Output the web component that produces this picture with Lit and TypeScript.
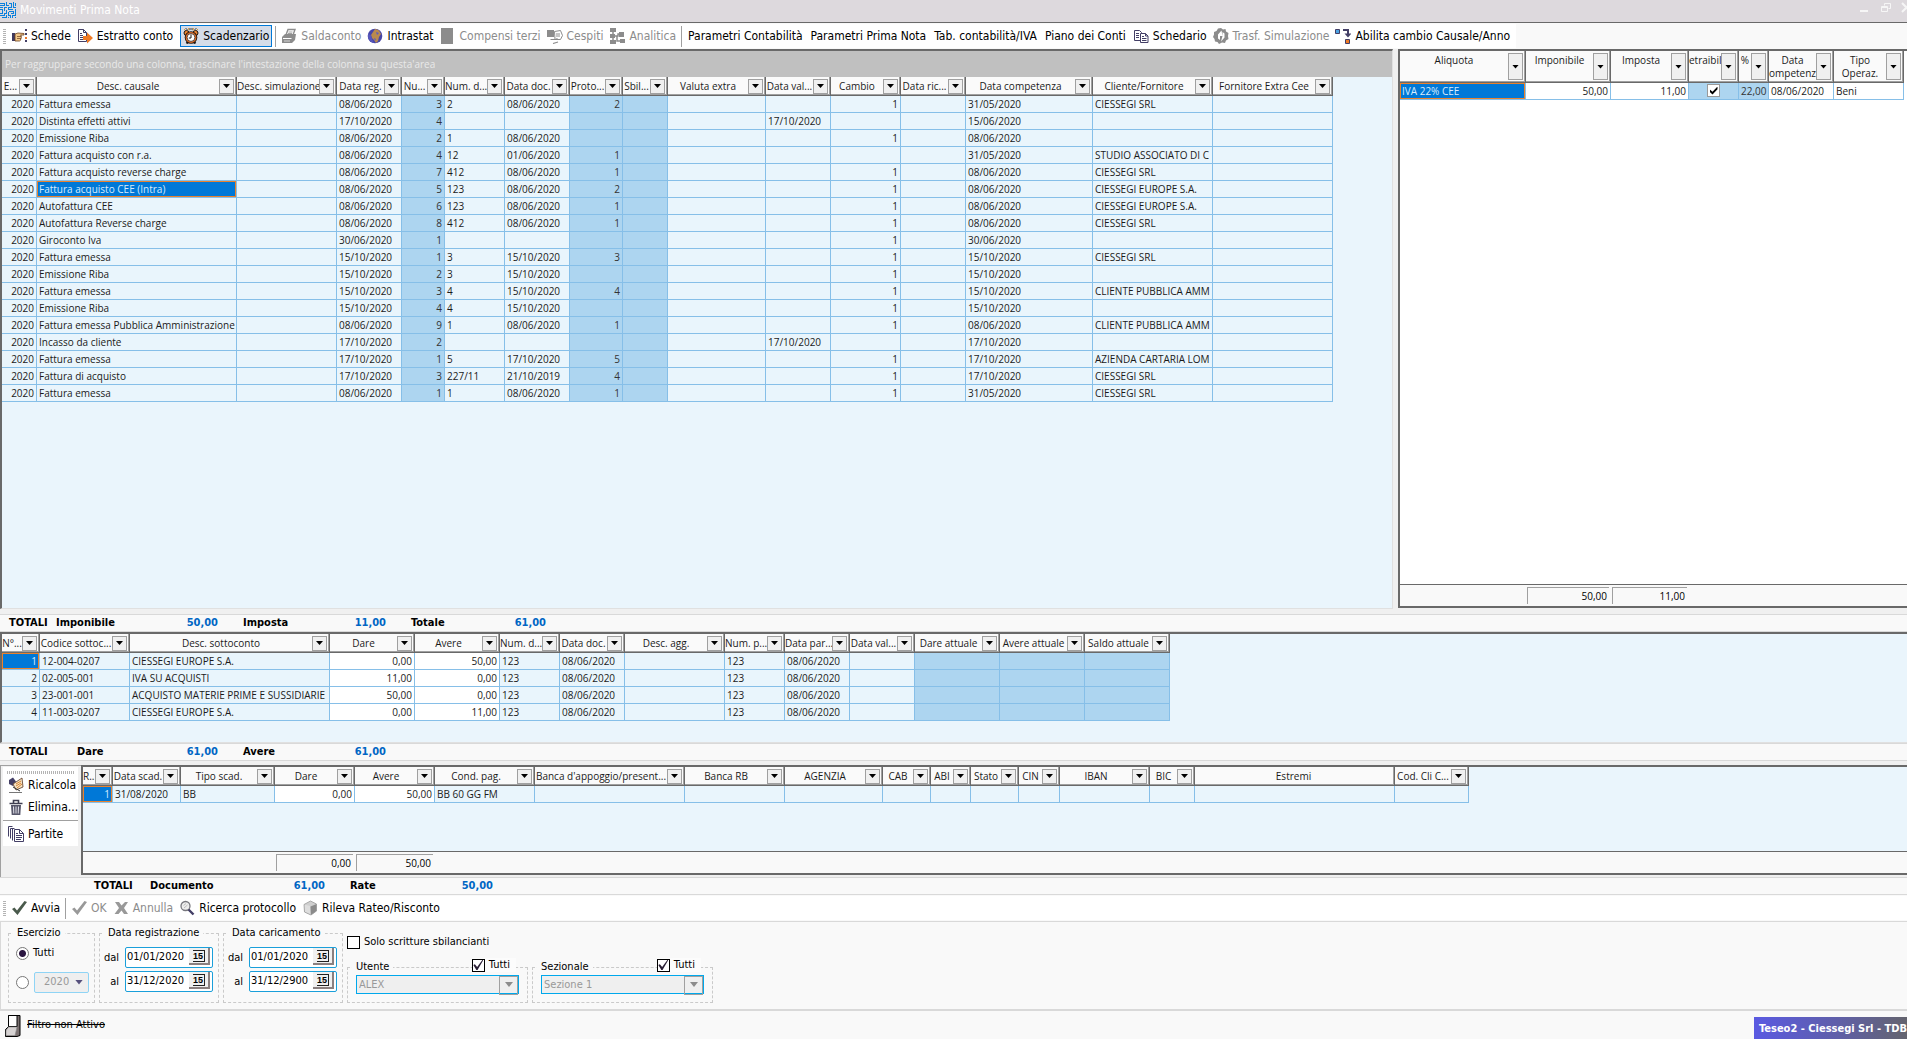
import { LitElement, html, css, svg, nothing } from "lit";
import { customElement, property } from "lit/decorators.js";
import { classMap } from "lit/directives/class-map.js";
import { styleMap } from "lit/directives/style-map.js";

type Column = {
  title: string;
  width: number;
  right?: boolean;
  tone?: "mid" | "white";
  noFilter?: boolean;
  check?: boolean;
};

const INK = "#433f66";

const ICONS: Record<string, unknown> = {
  maze: svg`<g fill="none" stroke="#0a80dc" stroke-width="1" shape-rendering="crispEdges">
    <path d="M0 1.500H4.500V3.500H0M2.500 5.500H0M6.500 0V3.500H9M6.500 5.500H4.500V9M8.500 1.500H11.500V5.500H8.500V7.500H13M13.500 0V5.500H16M15.500 1V3.500M0 7.500H2.500V11.500H0M6.500 7.500V11.500H4.500V13.500H0M1.500 15.500H6.500V13M8.500 9.500V13.500H10.500V16M8.500 9.500H13.500V11.500H11M15.500 7V13.500H12.500V16M8.500 15V16M14.500 15.500H16"/></g>`,
  hand: svg`<path d="M1 5h3v8H1z" fill="#3f3a60"/><path d="M4 6l3-1 6 .5v1.500H9.500l1 1-.5 1 .5 1-1 1 .3 1-1.300 1H4z" fill="#f3c98b" stroke="#6b3f1d" stroke-width=".8"/><path d="M6 8.500h4M6 10.500h4" stroke="#6b3f1d" stroke-width=".7"/><path d="M14 1h2v2h-2zM14 5h2v2h-2zM14 12h2v2h-2z" fill="${INK}"/><path d="M14 9h2v2h-2z" fill="#e8762c"/>`,
  export: svg`<path d="M1.500 1.500h5l3 3v9h-8z" fill="#fff" stroke="${INK}"/><path d="M6.500 1.500v3h3" fill="none" stroke="${INK}"/><path d="M3 5.500h2M3 7.500h3M3 9.500h3M3 11.500h3" stroke="${INK}"/><path d="M6 8h4V4.500L16 10l-6 5.500V12H6z" fill="#ef7a24"/>`,
  clock: svg`<path d="M3 3L1 1M6 2.500L5.500 0M10 2.500l.5-2.500M13 3l2-2" stroke="#d79b3c"/><path d="M7 0v2M9 0v2M2.500 0l2 2M13.500 0l-2 2" stroke="#1c1614" stroke-width=".8"/><circle cx="3.500" cy="5" r="2.500" fill="#f0862f" stroke="#1c1614"/><circle cx="12.500" cy="5" r="2.500" fill="#f0862f" stroke="#1c1614"/><path d="M3.500 15.500l2-2M12.500 15.500l-2-2" stroke="#1c1614" stroke-width="2"/><circle cx="8" cy="9.500" r="6.300" fill="#1c1614"/><circle cx="8" cy="9.500" r="5.400" fill="#e06a22"/><circle cx="8" cy="9.500" r="3.900" fill="#fff" stroke="#1c1614" stroke-width=".7"/><path d="M8 6.500v3.500H5.800" fill="none" stroke="#1c1614"/>`,
  printer: svg`<path d="M5 7l2-5.500h7L12 7z" fill="#fff" stroke="#8c8c8c" stroke-width="1.400"/><path d="M7.500 4h4M7 5.500h4" stroke="#8c8c8c" stroke-width=".8"/><path d="M1 9l3-3h11l-1 6-3 3H1z" fill="#8c8c8c"/><path d="M2 10.500h8.500" stroke="#fff"/><path d="M3 13h6" stroke="#d5d5d5"/>`,
  globe: svg`<circle cx="8" cy="8" r="7.300" fill="#4646a8"/><path d="M8 1a7 7 0 0 1 4 1.500L14 6l-2 3-1 4-2 2-2-3-2-2-1-3 2-3z" fill="#b98a4e"/><path d="M9 4l3 1-2 2zM7 10l2 1-1 2z" fill="#5a5ac0"/><path d="M1 6l3 1 1 4 2 4a7.300 7.300 0 0 1-6-6z" fill="#5656bb"/>`,
  block: svg`<path d="M2 0h12v16H2z" fill="#8c8c8c"/>`,
  assets: svg`<path d="M0 2h7v7H0z" fill="#8c8c8c"/><path d="M7.500 3.500l6-1 2 5-2 4H8z" fill="#fff" stroke="#8c8c8c"/><path d="M9 6h4M9 8h4" stroke="#8c8c8c"/><path d="M3.500 11.500h5l2-1M6 15.500l5-1.500" fill="none" stroke="#8c8c8c" stroke-width="1.200"/>`,
  tree: svg`<path d="M1 0h6v4H1zM1 6h5v4H1zM1 12h6v4H1zM10 4h5v5h-5zM11 11h5v4h-5z" fill="#8c8c8c"/><path d="M4 2v12M6 8h3V6h2M8 8v5h4" fill="none" stroke="#8c8c8c" stroke-width="1.500"/>`,
  cards: svg`<path d="M1.500 2.500h5l2 2v8h-7z" fill="#fff" stroke="${INK}"/><path d="M3 5.500h3M3 7.500h3M3 9.500h3" stroke="${INK}"/><path d="M7.500 5.500h5l2.500 2.500v6.500H7.500z" fill="#fff" stroke="${INK}"/><path d="M12.500 5.500V8H15M9 8.500h2M9 10.500h4.500M9 12.500h4.500" fill="none" stroke="${INK}"/>`,
  sync: svg`<path d="M8 0l2 1.500 2.500-.5.500 2.500L15.500 5l-.5 3 .5 3-2.500 1.500L12 15l-3-.5L6 16l-1.500-2L2 13.500 1.500 11 0 9l1-2.500L1 4l2.500-1L5 .5z" fill="#8c8c8c"/><path d="M8.500 2.500L5 6.500v4l2 1.500V8h2.500zM8 13.500l3.500-4v-4L9.500 4v4" fill="#fff"/>`,
  swap: svg`<path d="M.5 1.500h4v4h-4z" fill="#4ba3e3" stroke="${INK}"/><path d="M8 2h5v6" fill="none" stroke="${INK}" stroke-width="2"/><path d="M9.500 5.500h7L13 9.500z" fill="${INK}"/><path d="M10.500 11.500h4v4h-4z" fill="#ef7a24" stroke="${INK}"/>`,
  recalc: svg`<path d="M1 3l4-2.500 3 4L5 9 1 7z" fill="${INK}"/><path d="M5 7l9-6 1 9-7 3z" fill="#f6e3c4" stroke="#6b4b35" stroke-width=".9"/><path d="M8 7l5-3M8 9l5-3M9 11l5-4" stroke="#d8842f"/><path d="M1 15.500h13" stroke="#777"/><path d="M5 10l7 4" stroke="#333"/>`,
  trash: svg`<path d="M1.500 4.500h13M5.500 4V1.500h5V4" fill="none" stroke="#3d3d50" stroke-width="1.600"/><path d="M3 6h10l-.7 10H3.700z" fill="#56566a"/><path d="M5.500 7.500l.3 7M8 7.500v7M10.500 7.500l-.3 7" stroke="#e6e6ee"/>`,
  pages: svg`<path d="M.5 10.500v-10h4M2.500 12.500v-10h4M4.500 14.500v-12" fill="none" stroke="${INK}"/><path d="M6.500 3.500h5l4 4v8h-9z" fill="#fff" stroke="${INK}"/><path d="M11.500 3.500v4h4M8 7.500h2M8 9.500h6M8 11.500h6M8 13.500h5" fill="none" stroke="${INK}"/>`,
  check: svg`<path d="M1 9l2.500-1.500L6 10.500 13.500 1 16 2 6.500 15z" fill="#4a5a4c"/>`,
  checkOff: svg`<path d="M1 9l2.500-1.500L6 10.500 13.500 1 16 2 6.500 15z" fill="#999"/>`,
  cross: svg`<path d="M2 2h4l2.500 3.500L12 2h3l-4 6 4 6h-4L8.500 10.500 5.500 14H1.500l4.500-6z" fill="#999"/>`,
  lens: svg`<circle cx="6.500" cy="6" r="4.500" fill="#ededed" stroke="#77777d" stroke-width="1.300"/><path d="M4.500 5.500L7 3.500M5 8l3.500-3" stroke="#bbb"/><path d="M9.500 9.500l5 5" stroke="${INK}" stroke-width="2.400"/>`,
  cube: svg`<path d="M2 4.500L8.500 1 14.500 4v7L9 15 2.500 12z" fill="#cfcfcf"/><path d="M2 4.500L8 6v9L2.500 12z" fill="#dedede"/><path d="M8.500 6.500l6-2.500v7L9 15z" fill="#8b8b8b"/><path d="M2 4.500L8.500 1 14.500 4v7L9 15 2.500 12z" fill="none" stroke="#999" stroke-width=".8"/>`,
};

const icon = (name: string) =>
  html`<svg class="icon" width="16" height="16" viewBox="0 0 16 16" aria-hidden="true">${ICONS[name]}</svg>`;

@customElement("data-grid")
class DataGrid extends LitElement {
  @property({ attribute: false }) columns: Column[] = [];
  @property({ attribute: false }) rows: string[][] = [];
  @property({ attribute: false }) selected: [number, number] = [0, 0];
  @property({ type: Boolean }) tall = false;

  static styles = css`
    :host {
      display: block;
    }
    table {
      table-layout: fixed;
      border-collapse: separate;
      border-spacing: 0;
      font: 10px/16px "Open Sans", "Noto Sans", sans-serif;
      color: #1a1a1a;
    }
    th,
    td {
      box-sizing: border-box;
      padding: 0;
      font-weight: 400;
      overflow: hidden;
      white-space: nowrap;
    }
    th {
      height: 19px;
      background: #fafafa;
      border-right: 1px solid #696969;
      border-bottom: 1px solid #696969;
      box-shadow: inset -1px -1px #a0a0a0;
    }
    .head {
      display: flex;
      align-items: center;
      height: 18px;
      padding-right: 2px;
    }
    .caption {
      flex: 1;
      min-width: 0;
      overflow: hidden;
      text-align: center;
    }
    .tall th {
      height: 32px;
    }
    .tall .head {
      height: 31px;
    }
    .tall .caption {
      align-self: flex-start;
      line-height: 13px;
      padding-top: 3px;
      white-space: pre;
    }
    .filter {
      flex: none;
      box-sizing: border-box;
      width: 15px;
      height: 15px;
      padding: 0;
      display: grid;
      place-items: center;
      background: #f0f0f0;
      border: 1px solid #a0a0a0;
    }
    .tall .filter {
      height: 27px;
    }
    .filter::before {
      content: "";
      width: 7px;
      height: 4px;
      background: #000;
      clip-path: polygon(0 0, 100% 0, 50% 100%);
    }
    td {
      height: 17px;
      padding: 0 2px;
      background: #e9f5fc;
      border-right: 1px solid #86bfe8;
      border-bottom: 1px solid #86bfe8;
    }
    td.white,
    .tall td {
      background: #fff;
    }
    td.mid,
    .tall td.mid {
      background: #add5f0;
      color: #333;
    }
    td.right {
      text-align: right;
    }
    td.center {
      text-align: center;
    }
    td.selected,
    .tall td.selected {
      background: #0078d7;
      color: #d6ecff;
      box-shadow: inset 0 0 0 1px #e8822e;
    }
    input {
      appearance: none;
      display: inline-grid;
      place-items: center;
      width: 13px;
      height: 13px;
      margin: 1px 0 0;
      border: 1px solid #999;
      background: #fff;
      box-sizing: border-box;
      vertical-align: top;
    }
    input:checked::before {
      content: "";
      width: 8px;
      height: 8px;
      background: #000;
      clip-path: polygon(0 35%, 38% 65%, 100% 0, 100% 35%, 38% 100%, 0 65%);
    }
  `;

  render() {
    const total = this.columns.reduce((sum, c) => sum + c.width, 0);
    return html`<table class=${classMap({ tall: this.tall })} style=${styleMap({ width: `${total}px` })}>
      <colgroup>
        ${this.columns.map((c) => html`<col style=${styleMap({ width: `${c.width}px` })} />`)}
      </colgroup>
      <thead>
        <tr>
          ${this.columns.map(
            (c) => html`<th scope="col">
              <div class="head">
                <span class="caption">${c.title}</span>${c.noFilter ? nothing : html`<button class="filter" type="button" aria-haspopup="menu"></button>`}
              </div>
            </th>`
          )}
        </tr>
      </thead>
      <tbody>
        ${this.rows.map(
          (row, r) => html`<tr>
            ${this.columns.map(
              (c, i) => html`<td
                class=${classMap({
                  right: !!c.right,
                  center: !!c.check,
                  mid: c.tone === "mid",
                  white: c.tone === "white",
                  selected: this.selected[0] === r && this.selected[1] === i,
                })}
              >${c.check ? html`<input type="checkbox" aria-label=${c.title} checked />` : row[i] ?? ""}</td>`
            )}
          </tr>`
        )}
      </tbody>
    </table>`;
  }
}

const ENTRY_COLUMNS: Column[] = [
  { title: "E...", width: 35, right: true },
  { title: "Desc. causale", width: 200 },
  { title: "Desc. simulazione", width: 100 },
  { title: "Data reg.", width: 65 },
  { title: "Nu...", width: 43, right: true, tone: "mid" },
  { title: "Num. d...", width: 60 },
  { title: "Data doc.", width: 65 },
  { title: "Proto...", width: 53, right: true, tone: "mid" },
  { title: "Sbil...", width: 45, tone: "mid" },
  { title: "Valuta extra", width: 98 },
  { title: "Data val...", width: 65 },
  { title: "Cambio", width: 70, right: true },
  { title: "Data ric...", width: 65 },
  { title: "Data competenza", width: 127 },
  { title: "Cliente/Fornitore", width: 120 },
  { title: "Fornitore Extra Cee", width: 120 },
];

const entry = (
  causale: string, reg: string, num: string, numDoc: string, doc: string,
  proto: string, valuta: string, cambio: string, competenza: string, cliente = ""
) => ["2020", causale, "", reg, num, numDoc, doc, proto, "", "", valuta, cambio, "", competenza, cliente, ""];

const ENTRIES = [
  entry("Fattura emessa", "08/06/2020", "3", "2", "08/06/2020", "2", "", "1", "31/05/2020", "CIESSEGI SRL"),
  entry("Distinta effetti attivi", "17/10/2020", "4", "", "", "", "17/10/2020", "", "15/06/2020"),
  entry("Emissione Riba", "08/06/2020", "2", "1", "08/06/2020", "", "", "1", "08/06/2020"),
  entry("Fattura acquisto con r.a.", "08/06/2020", "4", "12", "01/06/2020", "1", "", "", "31/05/2020", "STUDIO ASSOCIATO DI C"),
  entry("Fattura acquisto reverse charge", "08/06/2020", "7", "412", "08/06/2020", "1", "", "1", "08/06/2020", "CIESSEGI SRL"),
  entry("Fattura acquisto CEE (Intra)", "08/06/2020", "5", "123", "08/06/2020", "2", "", "1", "08/06/2020", "CIESSEGI EUROPE S.A."),
  entry("Autofattura CEE", "08/06/2020", "6", "123", "08/06/2020", "1", "", "1", "08/06/2020", "CIESSEGI EUROPE S.A."),
  entry("Autofattura Reverse charge", "08/06/2020", "8", "412", "08/06/2020", "1", "", "1", "08/06/2020", "CIESSEGI SRL"),
  entry("Giroconto Iva", "30/06/2020", "1", "", "", "", "", "1", "30/06/2020"),
  entry("Fattura emessa", "15/10/2020", "1", "3", "15/10/2020", "3", "", "1", "15/10/2020", "CIESSEGI SRL"),
  entry("Emissione Riba", "15/10/2020", "2", "3", "15/10/2020", "", "", "1", "15/10/2020"),
  entry("Fattura emessa", "15/10/2020", "3", "4", "15/10/2020", "4", "", "1", "15/10/2020", "CLIENTE PUBBLICA AMM"),
  entry("Emissione Riba", "15/10/2020", "4", "4", "15/10/2020", "", "", "1", "15/10/2020"),
  entry("Fattura emessa Pubblica Amministrazione", "08/06/2020", "9", "1", "08/06/2020", "1", "", "1", "08/06/2020", "CLIENTE PUBBLICA AMM"),
  entry("Incasso da cliente", "17/10/2020", "2", "", "", "", "17/10/2020", "", "17/10/2020"),
  entry("Fattura emessa", "17/10/2020", "1", "5", "17/10/2020", "5", "", "1", "17/10/2020", "AZIENDA CARTARIA LOM"),
  entry("Fattura di acquisto", "17/10/2020", "3", "227/11", "21/10/2019", "4", "", "1", "17/10/2020", "CIESSEGI SRL"),
  entry("Fattura emessa", "08/06/2020", "1", "1", "08/06/2020", "1", "", "1", "31/05/2020", "CIESSEGI SRL"),
];

const VAT_COLUMNS: Column[] = [
  { title: "Aliquota", width: 126 },
  { title: "Imponibile", width: 85, right: true },
  { title: "Imposta", width: 78, right: true },
  { title: "etraibil", width: 50, tone: "mid", check: true },
  { title: "%", width: 30, right: true, tone: "mid" },
  { title: "Data\nompetenz", width: 65 },
  { title: "Tipo\nOperaz.", width: 70 },
];
const VAT_ROWS = [["IVA 22% CEE", "50,00", "11,00", "", "22,00", "08/06/2020", "Beni"]];

const ACCOUNT_COLUMNS: Column[] = [
  { title: "N°...", width: 38, right: true },
  { title: "Codice sottoc...", width: 90 },
  { title: "Desc. sottoconto", width: 200 },
  { title: "Dare", width: 85, right: true, tone: "white" },
  { title: "Avere", width: 85, right: true, tone: "white" },
  { title: "Num. d...", width: 60 },
  { title: "Data doc.", width: 65 },
  { title: "Desc. agg.", width: 100 },
  { title: "Num. p...", width: 60 },
  { title: "Data par...", width: 65 },
  { title: "Data val...", width: 65 },
  { title: "Dare attuale", width: 85, tone: "mid" },
  { title: "Avere attuale", width: 85, tone: "mid" },
  { title: "Saldo attuale", width: 85, tone: "mid" },
];
const account = (n: string, code: string, desc: string, dare: string, avere: string) => [
  n, code, desc, dare, avere, "123", "08/06/2020", "", "123", "08/06/2020",
];
const ACCOUNTS = [
  account("1", "12-004-0207", "CIESSEGI EUROPE S.A.", "0,00", "50,00"),
  account("2", "02-005-001", "IVA SU ACQUISTI", "11,00", "0,00"),
  account("3", "23-001-001", "ACQUISTO MATERIE PRIME E SUSSIDIARIE", "50,00", "0,00"),
  account("4", "11-003-0207", "CIESSEGI EUROPE S.A.", "0,00", "11,00"),
];

const DUE_COLUMNS: Column[] = [
  { title: "R...", width: 30, right: true },
  { title: "Data scad.", width: 68 },
  { title: "Tipo scad.", width: 94 },
  { title: "Dare", width: 80, right: true, tone: "white" },
  { title: "Avere", width: 80, right: true, tone: "white" },
  { title: "Cond. pag.", width: 100 },
  { title: "Banca d'appoggio/present...", width: 150 },
  { title: "Banca RB", width: 100 },
  { title: "AGENZIA", width: 98 },
  { title: "CAB", width: 48 },
  { title: "ABI", width: 40 },
  { title: "Stato", width: 48 },
  { title: "CIN", width: 41 },
  { title: "IBAN", width: 90 },
  { title: "BIC", width: 45 },
  { title: "Estremi", width: 200, noFilter: true },
  { title: "Cod. Cli C...", width: 74 },
];
const DUES = [["1", "31/08/2020", "BB", "0,00", "50,00", "BB 60 GG FM"]];

type Tool = { label?: string; icon?: string; off?: boolean; active?: boolean; sep?: boolean };

const TOOLS: Tool[] = [
  { label: "Schede", icon: "hand" },
  { label: "Estratto conto", icon: "export" },
  { label: "Scadenzario", icon: "clock", active: true },
  { sep: true },
  { label: "Saldaconto", icon: "printer", off: true },
  { label: "Intrastat", icon: "globe" },
  { label: "Compensi terzi", icon: "block", off: true },
  { label: "Cespiti", icon: "assets", off: true },
  { label: "Analitica", icon: "tree", off: true },
  { sep: true },
  { label: "Parametri Contabilità" },
  { label: "Parametri Prima Nota" },
  { label: "Tab. contabilità/IVA" },
  { label: "Piano dei Conti" },
  { label: "Schedario", icon: "cards" },
  { label: "Trasf. Simulazione", icon: "sync", off: true },
  { label: "Abilita cambio Causale/Anno", icon: "swap" },
];

const ACTIONS: Tool[] = [
  { label: "Avvia", icon: "check" },
  { sep: true },
  { label: "OK", icon: "checkOff", off: true },
  { label: "Annulla", icon: "cross", off: true },
  { label: "Ricerca protocollo", icon: "lens" },
  { label: "Rileva Rateo/Risconto", icon: "cube" },
];

@customElement("app-root")
class AppRoot extends LitElement {
  static styles = css`
    :host {
      display: flex;
      flex-direction: column;
      min-height: 100vh;
      box-sizing: border-box;
      overflow: hidden;
      background: #f0f0f0;
      color: #000;
      font: 11px/14px "DejaVu Sans Condensed", "DejaVu Sans", sans-serif;
    }
    * {
      box-sizing: border-box;
    }
    button,
    input,
    select {
      font: inherit;
      color: inherit;
      margin: 0;
      border-radius: 0;
    }
    .icon {
      flex: none;
      display: block;
    }

    .title {
      display: flex;
      align-items: center;
      height: 23px;
      padding-bottom: 3px;
      background: #ddd9dd;
      border-bottom: 1px solid #696969;
      overflow: hidden;
    }
    .title h1 {
      flex: 1;
      margin: 0 0 0 4px;
      font-size: 12px;
      font-weight: 400;
      color: #fff;
    }
    .window {
      flex: none;
      width: 21px;
      height: 16px;
      padding: 0;
      border: 0;
      background: none;
    }
    .window:last-child {
      margin-right: -10px;
    }

    .toolbar {
      display: flex;
      align-items: center;
      height: 26px;
      background: #f9f9f9;
      font-size: 12px;
    }
    .tools {
      display: flex;
      align-items: center;
      height: 24px;
      padding: 0 3px;
      background: #fff;
    }
    .toolbar.wide .tools {
      flex: 1;
    }
    .grip {
      width: 3px;
      height: 15px;
      margin-right: 2px;
      background: repeating-linear-gradient(#b4b4b4 0 1px, #fff 1px 2px);
    }
    .tool {
      display: flex;
      align-items: center;
      gap: 4px;
      height: 22px;
      padding: 0 2px;
      border: 1px solid transparent;
      background: none;
      white-space: nowrap;
    }
    .tool.plain {
      padding: 0 3px;
    }
    .tool:disabled {
      color: #8c8c8c;
    }
    .tool.active {
      margin: 0 1px 0 4px;
      background: #d5dce8;
      border-color: #0078d7;
    }
    .sep {
      width: 1px;
      height: 21px;
      margin: 0 2px;
      background: #a0a0a0;
    }

    .upper {
      flex: 1;
      display: grid;
      grid-template-columns: minmax(0, 1fr) 509px;
      gap: 5px;
    }
    .panel {
      display: flex;
      flex-direction: column;
      min-width: 0;
      overflow: hidden;
      background: #eaf5fc;
      border-style: solid;
      border-width: 2px 0 1px 2px;
      border-color: #696969 #e0e0e0 #e0e0e0 #696969;
    }
    .panel.entries {
      border-right-width: 1px;
    }
    .panel.vat {
      margin-bottom: 1px;
      background: #fff;
      border-bottom: 2px solid #696969;
    }
    .group {
      height: 26px;
      padding: 5px 3px;
      background: #c0c0c0;
      color: #e9e9e9;
      font: 10px/16px "Open Sans", "Noto Sans", sans-serif;
    }
    .sums {
      display: flex;
      gap: 3px;
      height: 22px;
      margin-top: auto;
      padding: 2px 0 2px 127px;
      background: #f9f9f9;
      border-top: 1px solid #696969;
      font: 10px/16px "Open Sans", "Noto Sans", sans-serif;
    }
    .sum {
      height: 17px;
      padding: 0 2px;
      text-align: right;
      border: solid #a0a0a0;
      border-width: 1px 0 0 1px;
    }

    .totals {
      display: flex;
      align-items: center;
      height: 18px;
      padding-left: 9px;
      background: #f9f9f9;
      border: solid #d9d9d9;
      border-width: 1px 0;
      font-weight: 700;
    }
    .totals.first {
      margin-top: 5px;
    }
    .totals.second {
      margin-bottom: 4px;
    }
    .totals.third {
      padding-left: 94px;
    }
    .lead {
      flex: none;
    }
    .total {
      display: flex;
      justify-content: space-between;
      margin-right: 25px;
    }
    .amount {
      color: #0066c4;
    }

    .accounts {
      min-height: 111px;
    }
    .lower {
      display: flex;
      min-height: 112px;
    }
    .side {
      flex: none;
      width: 81px;
      padding: 1px 3px 0 2px;
      border-left: 1px solid #a0a0a0;
      border-top: 1px solid #a0a0a0;
    }
    .actions {
      display: flex;
      flex-direction: column;
      padding: 4px 0 1px;
      background: #fff;
      font-size: 12px;
    }
    .actions .tool {
      padding: 0 4px;
    }
    .rail {
      height: 3px;
      margin: 0 4px;
      background: repeating-linear-gradient(90deg, #b4b4b4 0 1px, #fff 1px 2px);
    }
    .rule {
      height: 1px;
      margin: 2px 0;
      background: #a0a0a0;
    }
    .dues {
      flex: 1;
      margin-bottom: 2px;
      border-bottom: 2px solid #696969;
    }
    .dues .sums {
      padding-left: 193px;
    }

    .filters {
      display: flex;
      gap: 4px;
      padding: 4px 8px 6px 7px;
      background: #f9f9f9;
      border-top: 1px solid #d9d9d9;
      border-left: 1px solid #d9d9d9;
      border-bottom: 2px solid #d9d9d9;
    }
    fieldset {
      position: relative;
      min-width: 0;
      margin: 0;
      padding: 0;
      border: 1px dashed #cacaca;
    }
    legend {
      margin-left: 4px;
      padding: 0 4px;
    }
    .year {
      width: 87px;
      height: 77px;
    }
    .dates {
      width: 120px;
      height: 77px;
    }
    .choice {
      display: flex;
      align-items: center;
      gap: 4px;
      height: 20px;
      padding-left: 7px;
    }
    .choice + .choice {
      margin-top: 9px;
    }
    .year legend + .choice {
      margin-top: 3px;
    }
    .radio {
      appearance: none;
      flex: none;
      width: 13px;
      height: 13px;
      border: 1px solid #777;
      border-radius: 50%;
      background: #fff;
    }
    .radio:checked {
      background: radial-gradient(circle, #2a1540 0 3px, #fff 4px);
    }
    .drop {
      position: relative;
      display: flex;
    }
    .drop select {
      appearance: none;
      width: 100%;
      height: 19px;
      padding: 0 2px;
      background: #efefef;
      border: 1px solid #00a8ec;
      color: #999;
      opacity: 1;
    }
    .drop::after {
      content: "";
      position: absolute;
      right: 6px;
      top: 7px;
      width: 8px;
      height: 5px;
      background: #8c8c8c;
      clip-path: polygon(0 0, 100% 0, 50% 100%);
      pointer-events: none;
    }
    .drop.list::before {
      content: "";
      position: absolute;
      right: 1px;
      top: 1px;
      width: 17px;
      height: 17px;
      border: 1px solid #a0a0a0;
      pointer-events: none;
    }
    .drop.small {
      width: 55px;
      margin-left: 1px;
    }
    .drop.small select {
      height: 21px;
      padding-left: 9px;
      border-color: #8fd4f5;
      border-radius: 2px;
    }
    .drop.small::after {
      top: 8px;
      background: #56507c;
    }
    .date {
      display: flex;
      align-items: center;
      justify-content: flex-end;
      gap: 6px;
      height: 21px;
      margin: 0 5px 3px 0;
    }
    .dates legend + .date {
      margin-top: 7px;
    }
    .field {
      display: flex;
      width: 88px;
      height: 21px;
      padding: 0 2px 0 0;
      background: #fff;
      border: 1px solid #1a9fda;
      border-radius: 2px;
    }
    .field input {
      flex: 1;
      min-width: 0;
      padding: 0 0 2px 1px;
      border: 0;
      background: none;
    }
    .calendar {
      flex: none;
      display: grid;
      place-items: center;
      width: 21px;
      height: 17px;
      padding: 0;
      background: #f0f0f0;
      border: solid #8a8080;
      border-width: 0 2px 2px 0;
    }
    .calendar span {
      width: 12px;
      height: 12px;
      border: solid #222;
      border-width: 1px 1px 1px 0;
      font: 700 9px/10px "Liberation Sans", sans-serif;
      text-align: center;
    }
    .more {
      display: flex;
      flex-direction: column;
      justify-content: space-between;
      padding-top: 9px;
    }
    .boxes {
      display: flex;
      gap: 4px;
    }
    .list-box {
      width: 181px;
      height: 43px;
    }
    .list-box .list {
      margin: 1px 8px 0;
    }
    .tick {
      display: flex;
      align-items: center;
      gap: 4px;
      white-space: nowrap;
    }
    .tick input {
      appearance: none;
      display: grid;
      place-items: center;
      width: 13px;
      height: 13px;
      background: #fff;
      border: 1px solid #000;
    }
    .tick input:checked::before {
      content: "";
      width: 10px;
      height: 10px;
      background: #2a1f36;
      clip-path: polygon(0 50%, 15% 42%, 38% 70%, 90% 0, 100% 0, 42% 100%, 30% 100%);
    }
    .tick.over {
      position: absolute;
      right: 11px;
      top: -16px;
      padding-right: 6px;
      background: #fcfcfc;
    }

    .status {
      display: flex;
      align-items: center;
      gap: 6px;
      height: 28px;
      padding-left: 5px;
      background: #f9f9f9;
      overflow: hidden;
    }
    .off {
      flex: 1;
      text-decoration: line-through;
    }
    .badge {
      align-self: flex-end;
      height: 22px;
      width: 153px;
      padding-left: 5px;
      line-height: 23px;
      font-weight: 700;
      white-space: nowrap;
      color: #fff;
      background: linear-gradient(90deg, #5a5ae2, #5f5fa8 55%, #64646e);
    }
  `;

  private tool(t: Tool) {
    if (t.sep) return html`<span class="sep"></span>`;
    return html`<button
      type="button"
      class=${classMap({ tool: true, active: !!t.active, plain: !t.icon })}
      ?disabled=${!!t.off}
    >${t.icon ? icon(t.icon) : nothing}<span>${t.label}</span></button>`;
  }

  private totals(kind: string, leadWidth: number, items: [string, string, number][]) {
    return html`<div class="totals ${kind}">
      <span class="lead" style=${styleMap({ width: `${leadWidth}px` })}>TOTALI</span>
      ${items.map(
        ([label, value, width]) => html`<span class="total" style=${styleMap({ width: `${width}px` })}>
          <span>${label}</span><span class="amount">${value}</span>
        </span>`
      )}
    </div>`;
  }

  private sums(items: [string, number][]) {
    return html`<div class="sums">
      ${items.map(([v, w]) => html`<span class="sum" style=${styleMap({ width: `${w}px` })}>${v}</span>`)}
    </div>`;
  }

  private date(id: string, label: string, value: string) {
    return html`<div class="date">
      <label for=${id}>${label}</label>
      <span class="field">
        <input id=${id} type="text" .value=${value} />
        <button class="calendar" type="button"><span>15</span></button>
      </span>
    </div>`;
  }

  private listBox(id: string, title: string, value: string) {
    return html`<fieldset class="list-box">
      <legend><label for=${id}>${title}</label></legend>
      <div class="drop list"><select id=${id} disabled><option>${value}</option></select></div>
      <label class="tick over"><input type="checkbox" checked />Tutti</label>
    </fieldset>`;
  }

  render() {
    return html`
      <header class="title">
        ${icon("maze")}
        <h1>Movimenti Prima Nota</h1>
        <button class="window" type="button"><svg width="11" height="11"><path d="M1 9h8" stroke="#f6f6f6" stroke-width="2" /></svg></button>
        <button class="window" type="button"><svg width="11" height="11" fill="none" stroke="#f6f6f6"><path d="M1.500 4.500h6v5h-6zM1.500 5.500h6M4.500 3.500v-2h6v5h-2" /></svg></button>
        <button class="window" type="button"><svg width="11" height="11"><path d="M1 1l9 9M10 1l-9 9" stroke="#f6f6f6" stroke-width="2" /></svg></button>
      </header>

      <nav class="toolbar"><div class="tools"><span class="grip"></span>${TOOLS.map((t) => this.tool(t))}</div></nav>

      <main class="upper">
        <section class="panel entries">
          <div class="group">Per raggruppare secondo una colonna, trascinare l'intestazione della colonna su questa'area</div>
          <data-grid .columns=${ENTRY_COLUMNS} .rows=${ENTRIES} .selected=${[5, 1]}></data-grid>
        </section>
        <section class="panel vat">
          <data-grid tall .columns=${VAT_COLUMNS} .rows=${VAT_ROWS}></data-grid>
          ${this.sums([["50,00", 82], ["11,00", 75]])}
        </section>
      </main>

      ${this.totals("first", 47, [["Imponibile", "50,00", 162], ["Imposta", "11,00", 143], ["Totale", "61,00", 135]])}
      <section class="panel accounts">
        <data-grid .columns=${ACCOUNT_COLUMNS} .rows=${ACCOUNTS}></data-grid>
      </section>
      ${this.totals("second", 68, [["Dare", "61,00", 141], ["Avere", "61,00", 143]])}

      <div class="lower">
        <aside class="side">
          <div class="actions">
            <span class="rail"></span>
            ${this.tool({ label: "Ricalcola", icon: "recalc" })}
            ${this.tool({ label: "Elimina...", icon: "trash" })}
            <span class="rule"></span>
            ${this.tool({ label: "Partite", icon: "pages" })}
          </div>
        </aside>
        <section class="panel dues">
          <data-grid .columns=${DUE_COLUMNS} .rows=${DUES}></data-grid>
          ${this.sums([["0,00", 77], ["50,00", 77]])}
        </section>
      </div>
      ${this.totals("third", 56, [["Documento", "61,00", 175], ["Rate", "50,00", 143]])}

      <nav class="toolbar wide"><div class="tools"><span class="grip"></span>${ACTIONS.map((t) => this.tool(t))}</div></nav>

      <form class="filters">
        <fieldset class="year">
          <legend>Esercizio</legend>
          <div class="choice"><input class="radio" type="radio" name="year" id="all" checked /><label for="all">Tutti</label></div>
          <div class="choice">
            <input class="radio" type="radio" name="year" aria-label="2020" />
            <span class="drop small"><select aria-label="Esercizio" disabled><option>2020</option></select></span>
          </div>
        </fieldset>
        <fieldset class="dates">
          <legend>Data registrazione</legend>
          ${this.date("reg-from", "dal", "01/01/2020")} ${this.date("reg-to", "al", "31/12/2020")}
        </fieldset>
        <fieldset class="dates">
          <legend>Data caricamento</legend>
          ${this.date("load-from", "dal", "01/01/2020")} ${this.date("load-to", "al", "31/12/2900")}
        </fieldset>
        <div class="more">
          <label class="tick"><input type="checkbox" />Solo scritture sbilancianti</label>
          <div class="boxes">
            ${this.listBox("user", "Utente", "ALEX")} ${this.listBox("section", "Sezionale", "Sezione 1")}
          </div>
        </div>
      </form>

      <footer class="status">
        <svg class="icon" width="16" height="23" viewBox="0 0 16 23" aria-hidden="true">
          <path d="M3.500 1.500h11.500v20l-3 1H.5v-7l3-3z" fill="#7a7070" stroke="#000" />
          <path d="M3.500 1.500h8.500v11H3.500z" fill="#fff" stroke="#000" />
          <path d="M3.500 13h8.500l-2 8.500H1v-5z" fill="#d6d2d2" stroke="#888" stroke-width=".6" />
        </svg>
        <span class="off">Filtro non Attivo</span>
        <span class="badge">Teseo2 - Ciessegi Srl - TDB</span>
      </footer>
    `;
  }
}
